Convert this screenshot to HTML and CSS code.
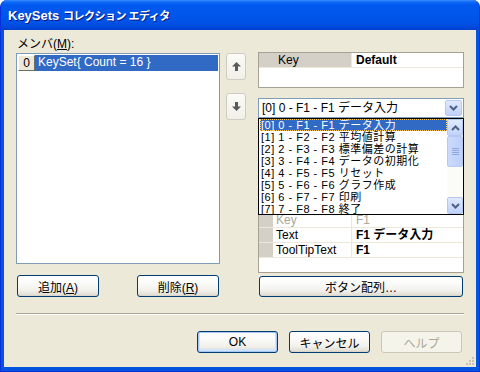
FILE: index.html
```html
<!DOCTYPE html>
<html>
<head>
<meta charset="utf-8">
<title>KeySets コレクション エディタ</title>
<link rel="stylesheet" href="styles.css">
</head>
<body>
<div class="window">
	<div class="titlebar">
		<span class="title">KeySets <span class="jp">コレクション エディタ</span></span>
	</div>
	<div class="client">
		<div class="main">
			<div class="left">
				<div class="label">メンバ(<u>M</u>):</div>
				<div class="members">
					<div class="member-row">
						<span class="idx">0</span>
						<span class="member">KeySet{ Count = 16 }</span>
					</div>
				</div>
				<div class="left-buttons">
					<button class="btn">追加(<u>A</u>)</button>
					<button class="btn">削除(<u>R</u>)</button>
				</div>
			</div>

			<div class="arrows">
				<button class="arrow">
					<svg width="9" height="9" viewBox="0 0 9 9"><path d="M4.5 0 L9 4.5 L6 4.5 L6 9 L3 9 L3 4.5 L0 4.5 Z" fill="#5b5b5b"/></svg>
				</button>
				<button class="arrow down">
					<svg width="9" height="9" viewBox="0 0 9 9"><path d="M4.5 9 L9 4.5 L6 4.5 L6 0 L3 0 L3 4.5 L0 4.5 Z" fill="#5b5b5b"/></svg>
				</button>
			</div>

			<div class="right">
				<div class="grid top-grid">
					<div class="prow head">
						<span class="pmargin"></span>
						<span class="plabel">Key</span>
						<span class="pvalue">Default</span>
					</div>
				</div>

				<div class="combo">
					<span class="combo-text">[0] 0 - F1 - F1 データ入力</span>
					<span class="dd-btn">
						<svg width="9" height="6" viewBox="0 0 9 6"><path d="M1 1 L4.5 4.5 L8 1" fill="none" stroke="#4d6185" stroke-width="2"/></svg>
					</span>
					<div class="dropdown">
						<div class="dd-items">
							<div class="dd-item sel">[0] 0 - F1 - F1 データ入力</div>
							<div class="dd-item">[1] 1 - F2 - F2 平均値計算</div>
							<div class="dd-item">[2] 2 - F3 - F3 標準偏差の計算</div>
							<div class="dd-item">[3] 3 - F4 - F4 データの初期化</div>
							<div class="dd-item">[4] 4 - F5 - F5 リセット</div>
							<div class="dd-item">[5] 5 - F6 - F6 グラフ作成</div>
							<div class="dd-item">[6] 6 - F7 - F7 印刷</div>
							<div class="dd-item">[7] 7 - F8 - F8 終了</div>
						</div>
						<div class="vscroll">
							<span class="sb-btn">
								<svg width="9" height="6" viewBox="0 0 9 6"><path d="M1 5 L4.5 1.5 L8 5" fill="none" stroke="#4d6185" stroke-width="2"/></svg>
							</span>
							<span class="sb-thumb">
								<svg width="7" height="7" viewBox="0 0 7 7"><path d="M0 0.5 H7 M0 2.5 H7 M0 4.5 H7 M0 6.5 H7" stroke="#8fa7dc" stroke-width="1"/></svg>
							</span>
							<span class="sb-track"></span>
							<span class="sb-btn">
								<svg width="9" height="6" viewBox="0 0 9 6"><path d="M1 1 L4.5 4.5 L8 1" fill="none" stroke="#4d6185" stroke-width="2"/></svg>
							</span>
						</div>
					</div>
				</div>

				<div class="grid prop-grid">
					<div class="prow"><span class="pmargin"></span><span class="plabel">Enabled</span><span class="pvalue">True</span></div>
					<div class="prow"><span class="pmargin"></span><span class="plabel">Visible</span><span class="pvalue">True</span></div>
					<div class="prow"><span class="pmargin"></span><span class="plabel">Image</span><span class="pvalue">(なし)</span></div>
					<div class="prow"><span class="pmargin"></span><span class="plabel">Tag</span><span class="pvalue"></span></div>
					<div class="prow"><span class="pmargin"></span><span class="plabel">Width</span><span class="pvalue">60</span></div>
					<div class="prow"><span class="pmargin"></span><span class="plabel">Style</span><span class="pvalue">Normal</span></div>
					<div class="prow disabled"><span class="pmargin"></span><span class="plabel">Key</span><span class="pvalue">F1</span></div>
					<div class="prow"><span class="pmargin"></span><span class="plabel">Text</span><span class="pvalue">F1 データ入力</span></div>
					<div class="prow"><span class="pmargin"></span><span class="plabel">ToolTipText</span><span class="pvalue">F1</span></div>
				</div>

				<button class="btn wide">ボタン配列…</button>
			</div>
		</div>

		<div class="separator"></div>

		<div class="footer">
			<button class="btn default">OK</button>
			<button class="btn">キャンセル</button>
			<button class="btn" disabled>ヘルプ</button>
		</div>

		<svg class="grip" width="10" height="10" viewBox="0 0 10 10">
			<rect x="7" y="1" width="2" height="2" fill="#c5c2b2"/>
			<rect x="4" y="4" width="2" height="2" fill="#c5c2b2"/>
			<rect x="7" y="4" width="2" height="2" fill="#c5c2b2"/>
			<rect x="1" y="7" width="2" height="2" fill="#c5c2b2"/>
			<rect x="4" y="7" width="2" height="2" fill="#c5c2b2"/>
			<rect x="7" y="7" width="2" height="2" fill="#c5c2b2"/>
		</svg>
	</div>
</div>
</body>
</html>
```

FILE: styles.css
```css
* {
	box-sizing: border-box;
}
body {
	margin: 0;
	background: #fff;
	font-family: "Liberation Sans", "Noto Sans CJK JP", sans-serif;
	font-size: 12px;
	color: #000;
}
u {
	text-decoration: underline;
	text-underline-offset: 1px;
}

/* window frame */
.window {
	width: 480px;
	height: 372px;
	background: #0454e0;
	border: 1px solid #0831d9;
	border-top: none;
	border-radius: 7px 7px 0 0;
	overflow: hidden;
}
.titlebar {
	height: 30px;
	padding-left: 7px;
	display: flex;
	align-items: center;
	background: linear-gradient(to bottom, #3b8dff 0, #0f6af7 2px, #0058ee 5px, #0057ec 40%, #0052e6 75%, #0049dc 90%, #003fd0 100%);
}
.title {
	color: #fff;
	font-weight: bold;
	font-size: 13px;
	text-shadow: 1px 1px 0 #0a1883;
	white-space: nowrap;
}
.title .jp {
	font-size: 11px;
	letter-spacing: -0.5px;
}
.client {
	position: relative;
	height: 337px;
	margin: 0 3px;
	background: #ece9d8;
	padding: 7px 12px 0 12px;
}

/* main area */
.main {
	display: flex;
	align-items: flex-start;
}
.left {
	width: 204px;
}
.label {
	height: 16px;
	line-height: 15px;
	padding-left: 1px;
}
.members {
	height: 211px;
	border: 1px solid #7f9db9;
	background: #fff;
	padding: 1px;
}
.member-row {
	display: flex;
	height: 16px;
	line-height: 15px;
}
.idx {
	width: 17px;
	text-align: center;
	background: #ece9d8;
	border: 1px solid;
	border-color: #fff #716f64 #716f64 #fff;
	font-size: 12px;
	line-height: 14px;
}
.member {
	flex: 1;
	background: #316ac5;
	color: #fff;
	padding-left: 3px;
}
.left-buttons {
	margin-top: 11px;
	display: flex;
	justify-content: space-between;
	padding: 0 1px;
}

/* buttons */
.btn {
	width: 82px;
	height: 22px;
	padding: 0;
	font-family: "Liberation Sans", "Noto Sans CJK JP", sans-serif;
	font-size: 12px;
	color: #000;
	border: 1px solid #003c74;
	border-radius: 3px;
	background: linear-gradient(to bottom, #fff 0, #fcfcfb 30%, #f2f1ec 70%, #e3e1d7 92%, #d6d0c5 100%);
}
.btn.default {
	box-shadow: inset 0 0 0 1px #a9c6f2, inset 0 -1px 0 2px #cee3fc;
}
.btn:disabled {
	color: #aca899;
	border-color: #c9c7ba;
	background: #f5f4ea;
}
.btn.wide {
	display: block;
	width: 204px;
	height: 21px;
	margin: 3px 1px 0;
}

.arrows {
	margin: 16px 0 0 6px;
	display: flex;
	flex-direction: column;
	gap: 13px;
}
.arrow {
	width: 20px;
	height: 27px;
	padding: 0;
	display: flex;
	align-items: center;
	justify-content: center;
	border: 1px solid #cfccc0;
	border-radius: 3px;
	background: linear-gradient(to bottom, #fbfbf8, #f1efe8);
}

/* right side */
.right {
	width: 206px;
	margin-left: 12px;
	padding-top: 15px;
}
.grid {
	border: 1px solid #a5a293;
	background: #fff;
	overflow: hidden;
}
.top-grid {
	height: 36px;
}
.prow {
	display: flex;
	height: 15px;
	line-height: 14px;
	border-bottom: 1px solid #ece9d8;
	white-space: nowrap;
}
.pmargin {
	width: 14px;
	background: #d4d0c8;
}
.plabel {
	width: 79px;
	padding-left: 3px;
	border-right: 1px solid #ece9d8;
}
.pvalue {
	flex: 1;
	padding-left: 4px;
	font-weight: bold;
}
.prow.head .plabel {
	background: #d4d0c8;
	padding-left: 5px;
}
.prow.disabled .plabel,
.prow.disabled .pvalue {
	color: #aca899;
	font-weight: normal;
}

.combo {
	position: relative;
	margin-top: 10px;
	height: 20px;
	border: 1px solid #7f9db9;
	background: #fff;
	display: flex;
	align-items: center;
	padding: 0 1px 0 3px;
}
.combo-text {
	flex: 1;
	line-height: 16px;
}
.dd-btn,
.sb-btn {
	width: 17px;
	height: 16px;
	display: flex;
	align-items: center;
	justify-content: center;
	border: 1px solid #b6c8f2;
	border-radius: 2px;
	background: linear-gradient(to bottom, #e0e9fd, #c0d2fb);
}
.dropdown {
	position: absolute;
	top: 19px;
	left: -1px;
	right: -1px;
	height: 97px;
	border: 1px solid #000;
	background: #fff;
	display: flex;
	z-index: 2;
}
.dd-items {
	flex: 1;
	padding-left: 1px;
}
.dd-item {
	height: 12px;
	line-height: 12px;
	padding-left: 1px;
	white-space: nowrap;
	font-size: 11px;
	letter-spacing: 0.5px;
}
.dd-item.sel {
	background: #316ac5;
	color: #fff;
	outline: 1px dotted #ffc65a;
	outline-offset: -1px;
}
.vscroll {
	width: 16px;
	display: flex;
	flex-direction: column;
	background: #fbfbf7;
}
.sb-btn {
	width: 16px;
	height: 17px;
}
.sb-thumb {
	height: 31px;
	display: flex;
	align-items: center;
	justify-content: center;
	border: 1px solid #b6c8f2;
	border-radius: 2px;
	background: linear-gradient(to right, #cbdafc, #bdcffa);
}
.sb-track {
	flex: 1;
}

.prop-grid {
	margin-top: 4px;
	height: 151px;
}

.separator {
	margin-top: 16px;
	height: 2px;
	border-top: 1px solid #aca899;
	border-bottom: 1px solid #fff;
}
.footer {
	margin-top: 16px;
	display: flex;
	justify-content: flex-end;
	gap: 11px;
	padding-right: 2px;
}
.footer .btn {
	width: 81px;
}
.grip {
	position: absolute;
	right: 1px;
	bottom: 1px;
}
```
